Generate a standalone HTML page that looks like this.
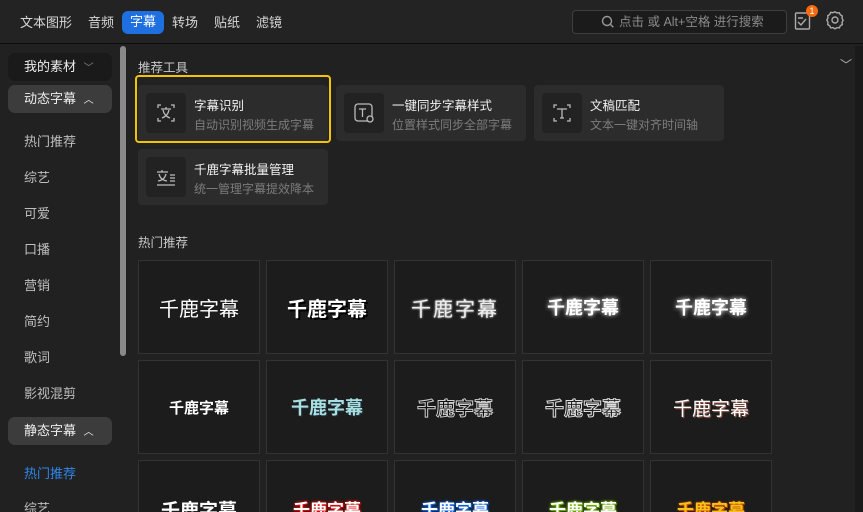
<!DOCTYPE html>
<html><head><meta charset="utf-8"><style>
*{margin:0;padding:0;box-sizing:border-box}
html,body{width:863px;height:512px;overflow:hidden}
body{background:#212121;font-family:"Liberation Sans","Noto Sans CJK SC",sans-serif;color:#ddd;position:relative}
.a{position:absolute;white-space:nowrap}
.top{left:0;top:0;width:863px;height:44px;background:#232323;border-bottom:1px solid #0e0e0e}
.tab{top:12px;font-size:13px;color:#d8d8d8}
.pill{left:8px;width:104px;height:28px;border-radius:7px;font-size:13px;line-height:27px;padding-left:16px;color:#eee}
.si{left:24px;font-size:13px;color:#bfbfbf}
.card{width:190px;height:56px;background:#2c2c2c;border-radius:4px}
.ib{position:absolute;left:8px;top:8px;width:40px;height:40px;background:#222;border-radius:4px}
.t1{position:absolute;left:56px;top:10px;font-size:12.5px;color:#f2f2f2}
.t2{position:absolute;left:56px;top:31px;font-size:12px;color:#7c7c7c}
.tile{width:122px;height:94px;background:#1c1c1c;border:1px solid #333;overflow:hidden;display:flex;align-items:center;justify-content:center;font-size:19px;color:#fff;font-weight:bold}
.b{height:60px;align-items:flex-start;padding-top:35px}
</style></head><body>
<div class="a top"></div>
<div class="a tab" style="left:20px">文本图形</div>
<div class="a tab" style="left:88px">音频</div>
<div class="a" style="left:122px;top:11px;width:42px;height:23px;background:#1e6fe0;border-radius:6px;color:#fff;font-size:13px;line-height:22px;padding-left:8px">字幕</div>
<div class="a tab" style="left:172px">转场</div>
<div class="a tab" style="left:214px">贴纸</div>
<div class="a tab" style="left:256px">滤镜</div>
<div class="a" style="left:572px;top:10px;width:215px;height:24px;border:1px solid #3e3e3e;border-radius:4px;background:#1b1b1b;font-size:12.5px;line-height:22px;color:#8a8a8a;padding-left:46px">点击 或 Alt+空格 进行搜索</div>
<svg class="a" style="left:601px;top:15px" width="14" height="14" viewBox="0 0 14 14"><circle cx="6" cy="6" r="4.5" fill="none" stroke="#999" stroke-width="1.4"/><path d="M9.3 9.3l3 3" stroke="#999" stroke-width="1.4"/></svg>
<svg class="a" style="left:794px;top:11px" width="18" height="20" viewBox="0 0 18 20"><rect x="1.5" y="2" width="14" height="16" rx="1" fill="none" stroke="#aaa" stroke-width="1.4"/><path d="M4 7h5M4 11l3 3 5-6" fill="none" stroke="#aaa" stroke-width="1.4"/></svg>
<div class="a" style="left:806px;top:5px;width:12px;height:12px;border-radius:6px;background:#f36a10;color:#fff;font-size:9px;text-align:center;line-height:12px">1</div>
<svg class="a" style="left:825px;top:10px" width="20" height="20" viewBox="0 0 20 20"><path d="M10 1.8l2 1.2 2.3-.3 1 2.1 2 1.2-.3 2.3 1.2 2-1.2 2 .3 2.3-2 1.2-1 2.1-2.3-.3-2 1.2-2-1.2-2.3.3-1-2.1-2-1.2.3-2.3L1.8 10 3 8l-.3-2.3 2-1.2 1-2.1L8 2.7z" fill="none" stroke="#aaa" stroke-width="1.4"/><circle cx="10" cy="10" r="3" fill="none" stroke="#aaa" stroke-width="1.4"/></svg>

<div class="a pill" style="top:53px;background:#1a1a1a">我的素材 <span style="color:#888;font-size:10px;margin-left:4px">﹀</span></div>
<div class="a pill" style="top:85px;background:#3c3c3c">动态字幕 <span style="font-size:10px;margin-left:4px">︿</span></div>
<div class="a si" style="top:131px">热门推荐</div>
<div class="a si" style="top:167px">综艺</div>
<div class="a si" style="top:203px">可爱</div>
<div class="a si" style="top:239px">口播</div>
<div class="a si" style="top:275px">营销</div>
<div class="a si" style="top:311px">简约</div>
<div class="a si" style="top:347px">歌词</div>
<div class="a si" style="top:383px">影视混剪</div>
<div class="a pill" style="top:417px;background:#3c3c3c">静态字幕 <span style="font-size:10px;margin-left:4px">︿</span></div>
<div class="a si" style="top:463px;color:#2f86e8">热门推荐</div>
<div class="a si" style="top:498px">综艺</div>
<div class="a" style="left:120px;top:46px;width:6px;height:310px;background:#8a8a8a;border-radius:3px"></div>
<div class="a" style="left:855px;top:46px;width:8px;height:466px;background:#1a1a1a"></div>

<div class="a" style="left:138px;top:57px;font-size:12.5px;color:#c8c8c8">推荐工具</div>
<div class="a" style="left:840px;top:56px;font-size:12px;color:#bbb">﹀</div>
<div class="a card" style="left:138px;top:85px"><div class="ib"><svg width="40" height="40" viewBox="0 0 40 40"><path d="M12 15v-3h3M25 12h3v3M28 25v3h-3M15 28h-3v-3M15 16h10M20 14v2M17 17c1 5 4 7 7 8M23 17c-1 5-4 7-7 8" fill="none" stroke="#bbb" stroke-width="1.3"/></svg></div><div class="t1">字幕识别</div><div class="t2">自动识别视频生成字幕</div></div>
<div class="a" style="left:135px;top:75px;width:196px;height:68px;border:2px solid #f5c400;border-radius:4px"></div>
<div class="a card" style="left:336px;top:85px"><div class="ib"><svg width="40" height="40" viewBox="0 0 40 40"><rect x="11" y="11" width="17" height="17" rx="3" fill="none" stroke="#bbb" stroke-width="1.3"/><path d="M15 16h7M18.5 16v8" stroke="#bbb" stroke-width="1.3"/><circle cx="26" cy="26" r="3" fill="#222" stroke="#bbb" stroke-width="1.3"/></svg></div><div class="t1">一键同步字幕样式</div><div class="t2">位置样式同步全部字幕</div></div>
<div class="a card" style="left:534px;top:85px"><div class="ib"><svg width="40" height="40" viewBox="0 0 40 40"><path d="M12 15v-3h3M25 12h3v3M28 25v3h-3M15 28h-3v-3M15 16h10M20 16v9M18 25h4" fill="none" stroke="#bbb" stroke-width="1.3"/></svg></div><div class="t1">文稿匹配</div><div class="t2">文本一键对齐时间轴</div></div>
<div class="a card" style="left:138px;top:149px"><div class="ib"><svg width="40" height="40" viewBox="0 0 40 40"><path d="M11 15h11M16 13v2M13 17c1 4 3 6 8 7M20 17c-1 4-3 6-8 7M11 28h18M24 18h5M24 21h5M24 24h5" fill="none" stroke="#bbb" stroke-width="1.3"/></svg></div><div class="t1">千鹿字幕批量管理</div><div class="t2">统一管理字幕提效降本</div></div>

<div class="a" style="left:138px;top:232px;font-size:12.5px;color:#c8c8c8">热门推荐</div>

<div class="a tile" style="left:138px;top:260px;font-weight:normal;font-size:20px">千鹿字幕</div>
<div class="a tile" style="left:266px;top:260px;font-size:20px;text-shadow:2px 2px 0 #000">千鹿字幕</div>
<div class="a tile" style="left:394px;top:260px;font-weight:normal;font-size:20px;color:#eee;text-shadow:0 0 2px #fff;letter-spacing:2px">千鹿字幕</div>
<div class="a tile" style="left:522px;top:260px;font-size:18px;text-shadow:0 0 4px #fff">千鹿字幕</div>
<div class="a tile" style="left:650px;top:260px;font-size:18px;text-shadow:0 0 5px #fff">千鹿字幕</div>
<div class="a tile" style="left:138px;top:360px;font-size:15px">千鹿字幕</div>
<div class="a tile" style="left:266px;top:360px;font-size:18px;color:#a8e0e0;text-shadow:1px 1px 0 #234">千鹿字幕</div>
<div class="a tile" style="left:394px;top:360px;font-size:19px;color:#111;-webkit-text-stroke:1px #ccc">千鹿字幕</div>
<div class="a tile" style="left:522px;top:360px;font-size:19px;color:#222;-webkit-text-stroke:1px #ddd">千鹿字幕</div>
<div class="a tile" style="left:650px;top:360px;font-size:19px;font-weight:normal;color:#fff;text-shadow:1px 1px 1px #a65">千鹿字幕</div>
<div class="a tile b" style="left:138px;top:460px;font-size:19px">千鹿字幕</div>
<div class="a tile b" style="left:266px;top:460px;font-size:17px;text-shadow:0 0 2px #e01010,0 0 3px #e01010,1px 1px 0 #c00">千鹿字幕</div>
<div class="a tile b" style="left:394px;top:460px;font-size:17px;text-shadow:0 0 2px #1060e0,0 0 3px #1060e0,1px 1px 0 #06c">千鹿字幕</div>
<div class="a tile b" style="left:522px;top:460px;font-size:17px;text-shadow:0 0 2px #70b000,0 0 3px #70b000,1px 1px 0 #5a0">千鹿字幕</div>
<div class="a tile b" style="left:650px;top:460px;font-size:17px;color:#f6c21a;text-shadow:0 0 2px #d05000,1px 1px 0 #c40">千鹿字幕</div>
</body></html>
